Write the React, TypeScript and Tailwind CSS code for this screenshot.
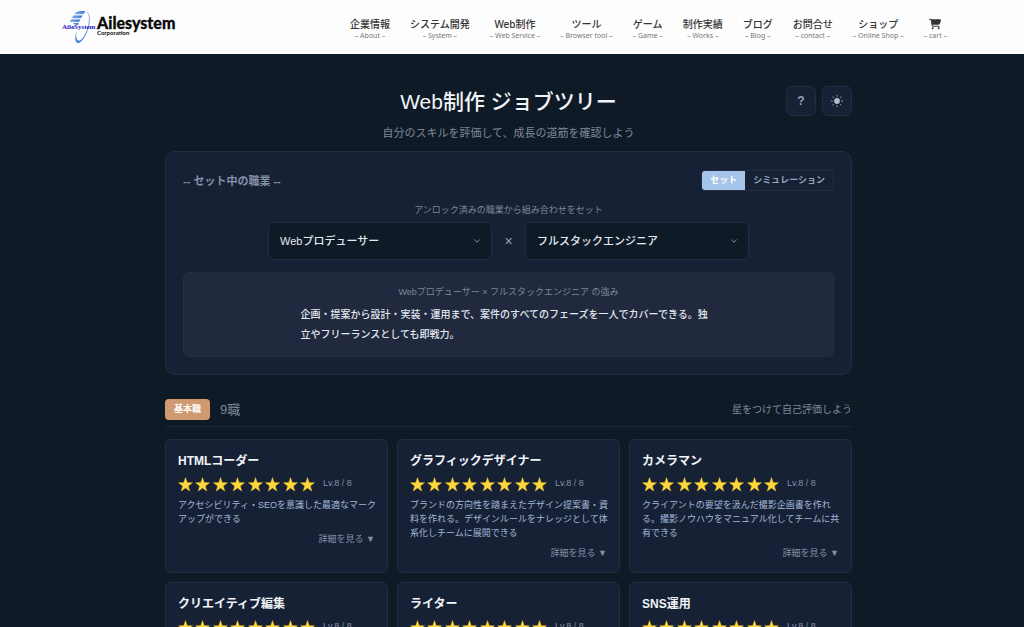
import React from "react";
import { ChevronDown } from "lucide-react";

const NAV = [
  { label: "企業情報", sub: "About" },
  { label: "システム開発", sub: "System" },
  { label: "Web制作", sub: "Web Service" },
  { label: "ツール", sub: "Browser tool" },
  { label: "ゲーム", sub: "Game" },
  { label: "制作実績", sub: "Works" },
  { label: "ブログ", sub: "Blog" },
  { label: "お問合せ", sub: "contact" },
  { label: "ショップ", sub: "Online Shop" },
];

const JOBS = [
  { name: "HTMLコーダー", text: "アクセシビリティ・SEOを意識した最適なマークアップができる" },
  {
    name: "グラフィックデザイナー",
    text: "ブランドの方向性を踏まえたデザイン提案書・資料を作れる。デザインルールをナレッジとして体系化しチームに展開できる",
  },
  {
    name: "カメラマン",
    text: "クライアントの要望を汲んだ撮影企画書を作れる。撮影ノウハウをマニュアル化してチームに共有できる",
  },
  { name: "クリエイティブ編集", text: "" },
  { name: "ライター", text: "" },
  { name: "SNS運用", text: "" },
];

function Logo() {
  return (
    <svg viewBox="0 0 114 36" className="h-9 w-[114px]" role="img" aria-label="Ailesystem Corporation">
      <defs>
        <linearGradient id="wing" x1="0" y1="1" x2="1" y2="0">
          <stop offset="0" stopColor="#8fc0f5" />
          <stop offset="1" stopColor="#2f62c4" />
        </linearGradient>
        <linearGradient id="ring" x1="0" y1="0" x2="0" y2="1">
          <stop offset="0" stopColor="#a9bdf0" />
          <stop offset="1" stopColor="#3f7fe0" />
        </linearGradient>
      </defs>
      <path
        fillRule="evenodd"
        fill="url(#ring)"
        d="M22.5 2.2C27.6 2 29.1 8 27.2 16.2C25.2 25.4 19.8 34.2 16 34C12.6 33.8 12.8 27.8 14.6 20.5C13.8 27 14.3 31.6 16.9 31.6C19.8 31.6 24.3 24.6 26.1 16.4C27.8 8.8 27 3.2 22.5 2.2Z"
      />
      <path fill="url(#wing)" d="M14 3.2Q18 1.6 23.4 2.2L21.4 5.2H12.4Z" />
      <path fill="url(#wing)" d="M11.6 6.4H20.6L19 9.3H9.6Z" />
      <path fill="url(#wing)" d="M9 10.4H18.4L17.2 13H7.8Z" />
      <path fill="url(#wing)" d="M11 14H16.8L16.3 16H13Z" />
      <text x="0" y="20" fontFamily="'Liberation Serif', serif" fontWeight="700" fontSize="7" fill="#1d17c4">
        AileSystem
      </text>
      <text x="35" y="20" fontFamily="Lato, sans-serif" fontWeight="900" fontSize="16" fill="#0a0a0a" stroke="#0a0a0a" strokeWidth=".3">
        Ailesystem
      </text>
      <text x="35" y="26" fontFamily="Lato, sans-serif" fontWeight="700" fontSize="6" fill="#0a0a0a">
        Corporation
      </text>
    </svg>
  );
}

function CartIcon() {
  return (
    <svg viewBox="0 0 576 512" className="h-3 w-3" fill="#333" aria-hidden="true">
      <path d="M0 24C0 10.700 10.700 0 24 0h45.500c22 0 41.500 12.800 50.600 32h411c26.300 0 45.500 25 38.600 50.400l-41 152.300c-8.500 31.400-37 53.300-69.500 53.300H170.700l5.400 28.500c2.200 11.300 12.100 19.500 23.600 19.500H488c13.300 0 24 10.700 24 24s-10.700 24-24 24H199.700c-34.600 0-64.300-24.600-70.700-58.500L77.400 54.500c-.7-3.800-4-6.500-7.900-6.500H24C10.700 48 0 37.300 0 24zM128 464a48 48 0 1 1 96 0 48 48 0 1 1-96 0zm336-48a48 48 0 1 1 0 96 48 48 0 1 1 0-96z" />
    </svg>
  );
}

function Header() {
  return (
    <header className="flex h-[54px] shrink-0 items-center bg-[#fdfdfd] pl-[62px] pr-[77px] font-['Noto_Sans','Noto_Sans_CJK_JP',sans-serif]">
      <a href="#top">
        <Logo />
      </a>
      <nav className="ml-auto flex gap-5 pt-1.5 text-center">
        {NAV.map((n) => (
          <a key={n.sub} href={"#" + n.sub} className="block whitespace-nowrap">
            <span className="block text-[10px] leading-3 font-medium text-[#333]">{n.label}</span>
            <span className="block text-[7px] leading-3 text-[#777]">– {n.sub} –</span>
          </a>
        ))}
        <a href="#cart" className="block whitespace-nowrap">
          <span className="flex h-3 items-center justify-center">
            <CartIcon />
          </span>
          <span className="block text-[7px] leading-3 text-[#777]">– cart –</span>
        </a>
      </nav>
    </header>
  );
}

function SunIcon() {
  return (
    <svg viewBox="0 0 14 14" className="h-3.5 w-3.5" aria-hidden="true">
      <circle cx="7" cy="7" r="2.900" fill="#b4bccb" />
      <path
        d="M7 .8v2M7 11.200v2M.8 7h2M11.200 7h2M2.600 2.600l1.400 1.400M10 10l1.400 1.400M2.600 11.400L4 10M10 4l1.400-1.400"
        stroke="#9aa3b5"
        strokeWidth=".9"
      />
    </svg>
  );
}

function JobSelect({ label, value }: { label: string; value: string }) {
  return (
    <div className="relative w-56">
      <select
        aria-label={label}
        defaultValue={value}
        className="block h-[38px] w-full appearance-none rounded-md border border-[#222d41] bg-[#0f1a27] px-[11px] text-[11px] font-medium text-[#e2e8f0]"
      >
        <option>{value}</option>
      </select>
      <ChevronDown className="pointer-events-none absolute top-[14px] right-[10px] h-2.5 w-2.5 text-[#94a3b8]" />
    </div>
  );
}

function Stars() {
  return (
    <div className="flex w-[137px] justify-between" role="img" aria-label="8 / 8">
      {Array.from({ length: 8 }, (_, i) => (
        <svg key={i} viewBox="0 0 24 24" className="h-[15px] w-[15px]" aria-hidden="true">
          <path
            fill="#fbd83c"
            stroke="#e9b92c"
            strokeWidth=".6"
            d="M12 .8l2.800 8.100 8.600.2-6.800 5.200 2.400 8.300L12 17.700l-7 4.900 2.400-8.300L.6 9.100l8.600-.2z"
          />
        </svg>
      ))}
    </div>
  );
}

function JobCard({ name, text }: { name: string; text: string }) {
  return (
    <article className="min-h-[134px] rounded-md border border-[#222d41] bg-[#172135] pt-3 pr-2 pb-3 pl-3">
      <h3 className="text-xs leading-[18px] font-bold text-[#f1f5f9]">{name}</h3>
      <div className="mt-1 flex h-5 items-center gap-2">
        <Stars />
        <span className="text-[9px] text-[#8490a5]">Lv.8 / 8</span>
      </div>
      <p className="mt-1 text-[9px] leading-[14px] text-[#a3b8d9]">{text}</p>
      <button type="button" className="mt-1.5 mr-1 ml-auto block text-[9px] leading-[14px] text-[#8490a5]">
        詳細を見る ▼
      </button>
    </article>
  );
}

export default function App() {
  return (
    <div className="flex h-screen flex-col overflow-hidden bg-[#0f1a27] font-['Liberation_Sans','Noto_Sans_CJK_JP',sans-serif]">
      <Header />
      <div className="pr-[7px]">
        <main className="mx-auto w-full max-w-[687px] pt-8">
          <div className="grid grid-cols-[66px_1fr_66px] items-start">
            <div />
            <div className="text-center">
              <h1 className="text-[21px] leading-8 font-medium text-[#f1f5f9]">Web制作 ジョブツリー</h1>
              <p className="mt-1.5 text-[11px] leading-[18px] text-[#7d889b]">
                自分のスキルを評価して、成長の道筋を確認しよう
              </p>
            </div>
            <div className="flex gap-1.5">
              <button
                type="button"
                aria-label="ヘルプ"
                className="flex h-[30px] w-[30px] items-center justify-center rounded-md border border-[#222d41] bg-[#172135] text-xs font-bold text-[#94a3b8]"
              >
                ?
              </button>
              <button
                type="button"
                aria-label="テーマ切替"
                className="flex h-[30px] w-[30px] items-center justify-center rounded-md border border-[#222d41] bg-[#172135]"
              >
                <SunIcon />
              </button>
            </div>
          </div>

          <section className="mt-[9px] rounded-[10px] border border-[#222d41] bg-[#172135] px-[17px] pt-[18px] pb-[17px]">
            <div className="flex items-center justify-between">
              <h2 className="text-[11px] leading-4 font-bold text-[#8490a5]">-- セット中の職業 --</h2>
              <div className="flex h-[21px] overflow-hidden rounded-sm border border-[#222d41] text-[9px] font-bold">
                <button type="button" className="bg-[#a5c4e9] px-2 text-white">
                  セット
                </button>
                <button type="button" className="px-2 text-[#94a3b8]">
                  シミュレーション
                </button>
              </div>
            </div>
            <p className="mt-3 text-center text-[9px] leading-[14px] text-[#7d889b]">
              アンロック済みの職業から組み合わせをセット
            </p>
            <div className="mt-[5px] flex items-center justify-center">
              <JobSelect label="職業1" value="Webプロデューサー" />
              <span className="w-[33px] text-center text-sm text-[#94a3b8]">×</span>
              <JobSelect label="職業2" value="フルスタックエンジニア" />
            </div>
            <div className="mt-3 rounded-md border border-[#242e42] bg-[#20293d] px-3 pt-3 pb-[11px]">
              <p className="text-center text-[9px] leading-[14px] text-[#7d889b]">
                Webプロデューサー × フルスタックエンジニア の強み
              </p>
              <p className="mx-auto mt-1.5 max-w-[416px] text-[10px] leading-5 font-medium text-[#e2e8f0]">
                企画・提案から設計・実装・運用まで、案件のすべてのフェーズを一人でカバーできる。独立やフリーランスとしても即戦力。
              </p>
            </div>
          </section>

          <section className="mt-6">
            <div className="flex items-center border-b border-[#1c2738] pb-1.5">
              <span className="flex h-[21px] items-center rounded-sm bg-[#cf9a70] px-[9px] text-[9px] font-bold text-white">
                基本職
              </span>
              <span className="ml-2.5 text-[13px] leading-[18px] text-[#7d889b]">9職</span>
              <span className="ml-auto text-[10px] text-[#7d889b]">星をつけて自己評価しよう</span>
            </div>
            <div className="mt-3 grid grid-cols-3 gap-[9px]">
              {JOBS.map((j) => (
                <JobCard key={j.name} {...j} />
              ))}
            </div>
          </section>
        </main>
      </div>
    </div>
  );
}
